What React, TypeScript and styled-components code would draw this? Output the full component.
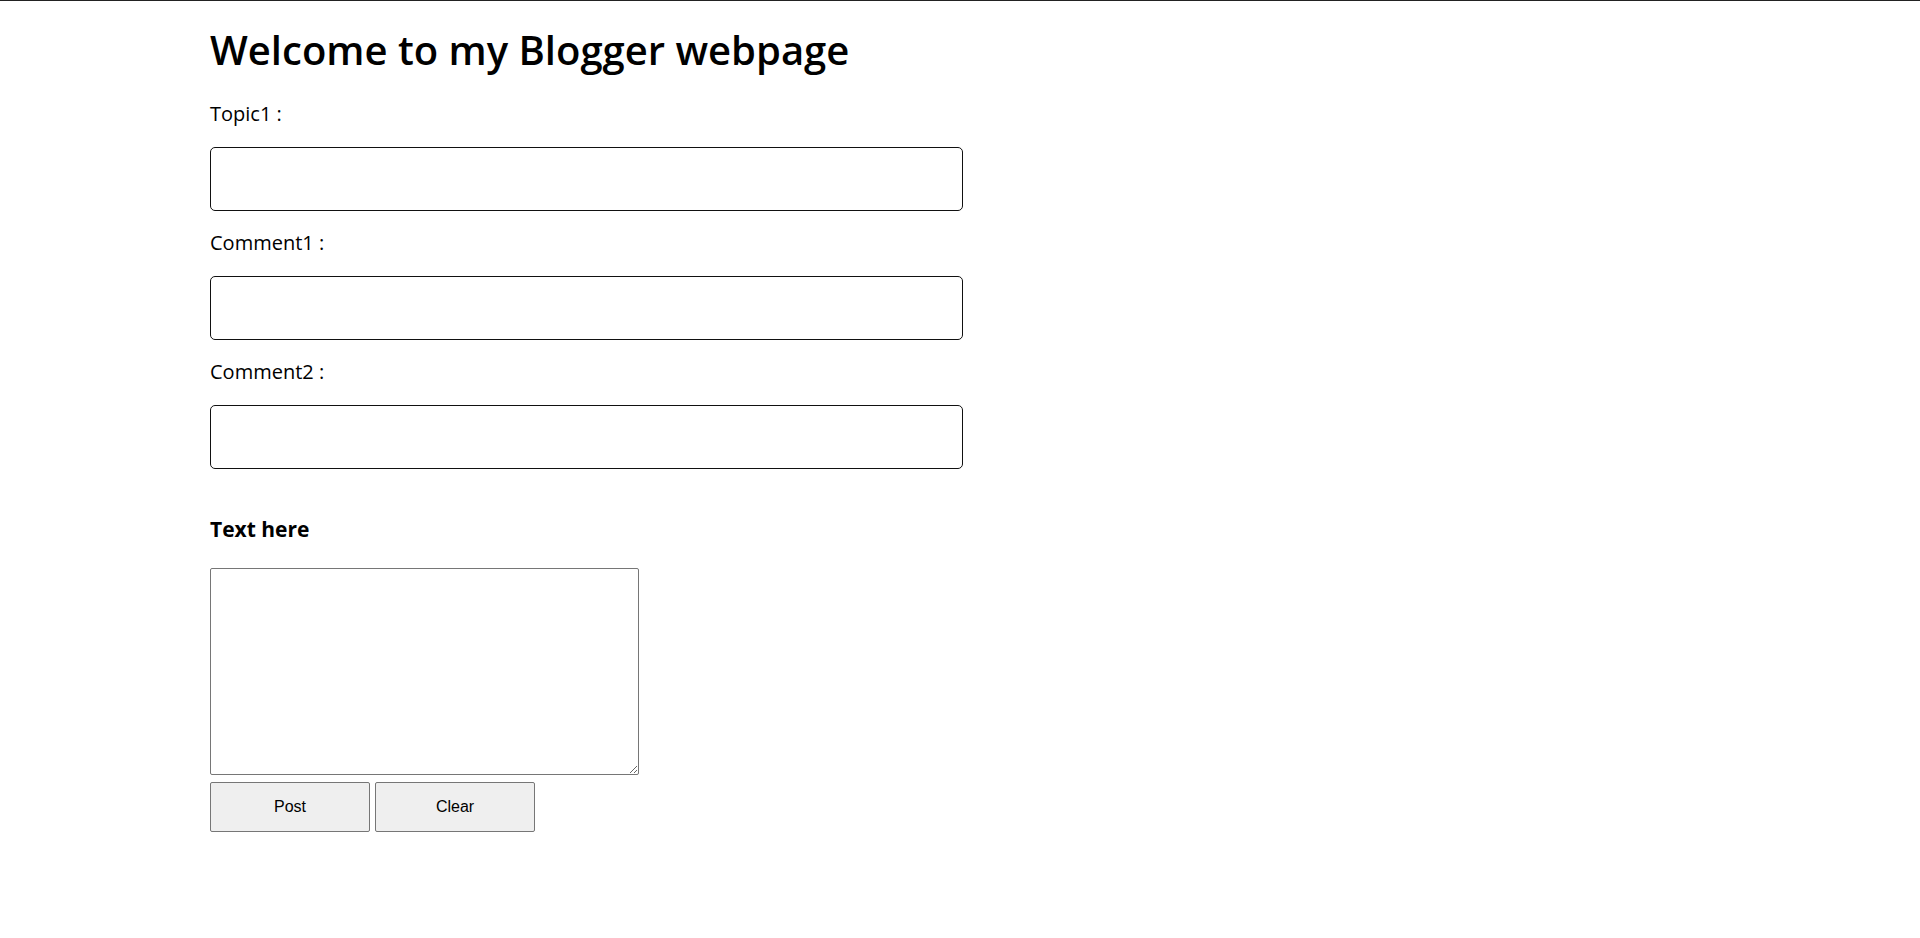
import styled, { createGlobalStyle } from "styled-components";

const GlobalStyle = createGlobalStyle`
  body {
    margin: 0;
    background: #fff;
    color: #000;
    font-family: "Open Sans", "Noto Sans", sans-serif;
  }
`
const StyledPage = styled.div`
  border-top: 1px solid #222;
  padding: 0 0 60px 210px;
`
const StyledH1 = styled.h1`
  margin: 26px 0 29px;
  font-size: 40px;
  line-height: 46px;
  font-weight: 600;
`
const StyledForm = styled.form`
  display: flex;
  flex-direction: column;
  width: 753px;
`
const StyledLabel = styled.label`
  font-size: 20px;
  line-height: 24px;
  margin: 0 0 21px;

  &:not(:first-child) {
    margin-top: 20px;
  }
`
const StyledInput = styled.input`
  box-sizing: border-box;
  width: 100%;
  height: 64px;
  border: 1px solid #111;
  border-radius: 5px;
  padding: 0 12px;
  font-size: 18px;
  font-family: inherit;
  outline: none;
`
const StyledH3 = styled.h3`
  margin: 47px 0 26px;
  font-size: 21px;
  line-height: 26px;
  font-weight: bold;
`
const StyledTextarea = styled.textarea`
  display: block;
  box-sizing: border-box;
  width: 429px;
  height: 207px;
  border: 1px solid #767676;
  border-radius: 2px;
  font-family: inherit;
`
const StyledButtonRow = styled.div`
  display: flex;
  gap: 5px;
  margin-top: 7px;
`
const StyledButton = styled.button`
  box-sizing: border-box;
  width: 160px;
  height: 50px;
  background: #efefef;
  border: 1px solid #767676;
  border-radius: 2px;
  font-family: Arial, "Liberation Sans", sans-serif;
  font-size: 16px;
  color: #000;
`

const fields: string[] = ["Topic1", "Comment1", "Comment2"]

export default function App(){
  return(
    <>
      <GlobalStyle />
      <StyledPage>
        <StyledH1>Welcome to my Blogger webpage</StyledH1>
        <StyledForm onSubmit={(e)=>e.preventDefault()}>
          {
            fields.map((name)=>[
              <StyledLabel key={name+"-label"} htmlFor={name}>{name} :</StyledLabel>,
              <StyledInput key={name} id={name} type="text" />
            ])
          }
        </StyledForm>
        <StyledH3>Text here</StyledH3>
        <StyledTextarea />
        <StyledButtonRow>
          <StyledButton type="button">Post</StyledButton>
          <StyledButton type="button">Clear</StyledButton>
        </StyledButtonRow>
      </StyledPage>
    </>
  )
}
